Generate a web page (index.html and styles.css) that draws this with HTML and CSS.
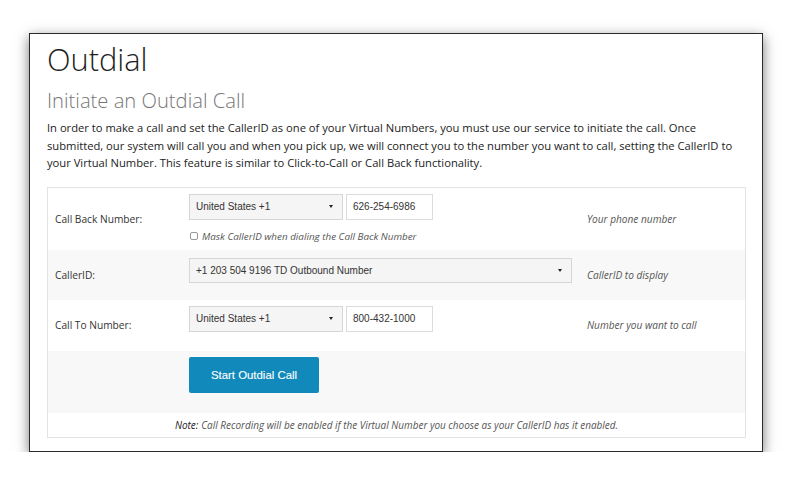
FILE: index.html
```html
<!DOCTYPE html>
<html>
<head>
<meta charset="utf-8">
<link rel="stylesheet" href="styles.css">
</head>
<body>
<div class="window">
  <h1 class="title">Outdial</h1>
  <h2 class="subtitle">Initiate an Outdial Call</h2>
  <p class="intro">In order to make a call and set the CallerID as one of your Virtual Numbers, you must use our service to initiate the call. Once submitted, our system will call you and when you pick up, we will connect you to the number you want to call, setting the CallerID to your Virtual Number. This feature is similar to Click-to-Call or Call Back functionality.</p>

  <div class="form">
    <div class="row row-callback">
      <div class="label">Call Back Number:</div>
      <div class="field">
        <div class="pair">
          <div class="select country"><span>United States +1</span><span class="caret"></span></div>
          <div class="input">626-254-6986</div>
        </div>
        <label class="check"><span class="box"></span><span>Mask CallerID when dialing the Call Back Number</span></label>
      </div>
      <div class="help">Your phone number</div>
    </div>

    <div class="row row-alt row-callerid">
      <div class="label">CallerID:</div>
      <div class="field">
        <div class="select wide"><span>+1 203 504 9196 TD Outbound Number</span><span class="caret"></span></div>
      </div>
      <div class="help">CallerID to display</div>
    </div>

    <div class="row row-callto">
      <div class="label">Call To Number:</div>
      <div class="field">
        <div class="pair">
          <div class="select country"><span>United States +1</span><span class="caret"></span></div>
          <div class="input">800-432-1000</div>
        </div>
      </div>
      <div class="help">Number you want to call</div>
    </div>

    <div class="row row-alt row-action">
      <div class="label"></div>
      <div class="field">
        <button class="btn">Start Outdial Call</button>
      </div>
      <div class="help"></div>
    </div>

    <div class="note"><b>Note:</b> Call Recording will be enabled if the Virtual Number you choose as your CallerID has it enabled.</div>
  </div>
</div>
</body>
</html>
```

FILE: styles.css
```css
html, body {
  margin: 0;
  padding: 0;
  background: #ffffff;
}

body {
  font-family: "Open Sans", "Noto Sans", sans-serif;
  color: #222;
}

.window {
  box-sizing: border-box;
  margin: 33px 0 0 29px;
  width: 734px;
  height: 419px;
  border: 1px solid #2a2a2a;
  background: #fff;
  box-shadow: 0 4px 12px rgba(0, 0, 0, 0.55);
  padding: 0 16px 0 17px;
}

.title {
  margin: 5px 0 0;
  font-size: 30.8px;
  line-height: 40px;
  font-weight: 300;
  color: #1e1e1e;
}

.subtitle {
  margin: 8px 0 0;
  font-size: 20.2px;
  line-height: 26px;
  font-weight: 300;
  color: #777;
}

.intro {
  margin: 6px 0 0;
  font-size: 11.2px;
  line-height: 17.6px;
  color: #222;
}

.form {
  margin-top: 15px;
  border: 1px solid #e3e3e3;
}

.row {
  display: grid;
  grid-template-columns: 141px 398px 1fr;
  align-items: center;
  background: #fff;
}

.row-alt {
  background: #f8f8f8;
}

.row-callback { height: 62px; }
.row-callerid { height: 50px; }
.row-callto { height: 51px; }
.row-action { height: 62px; }

.label {
  padding-left: 7px;
  font-size: 10.2px;
  color: #333;
}

.field {
  align-self: start;
  padding-top: 6px;
}

.row-callerid .field {
  padding-top: 8px;
}

.help {
  font-size: 10.1px;
  font-style: italic;
  color: #555;
}

.pair {
  display: flex;
  gap: 3px;
}

.select,
.input {
  box-sizing: border-box;
  height: 26px;
  display: flex;
  align-items: center;
  font-family: "Liberation Sans", Arial, sans-serif;
  font-size: 10px;
  color: #333;
}

.select {
  justify-content: space-between;
  padding: 0 9px 0 6px;
  background: #f5f5f5;
  border: 1px solid #d6d6d6;
}

.country {
  width: 154px;
}

.wide {
  width: 383px;
  height: 25px;
}

.caret {
  width: 0;
  height: 0;
  border-left: 2px solid transparent;
  border-right: 2px solid transparent;
  border-top: 3px solid #222;
}

.input {
  width: 87px;
  padding: 0 6px;
  background: #fff;
  border: 1px solid #dcdcdc;
}

.check {
  display: flex;
  align-items: center;
  gap: 4px;
  margin-top: 9px;
  font-size: 9.85px;
  font-style: italic;
  color: #555;
}

.box {
  box-sizing: border-box;
  width: 8px;
  height: 8px;
  border: 1px solid #999;
  border-radius: 2px;
  background: #fff;
  margin-left: 1px;
}

.btn {
  width: 130px;
  height: 36px;
  border: none;
  border-radius: 2px;
  background: #1189bb;
  color: #fff;
  font-family: "Liberation Sans", Arial, sans-serif;
  font-size: 11.4px;
  -webkit-text-stroke: 0.12px #fff;
  padding: 0;
}

.note {
  height: 24px;
  display: flex;
  align-items: center;
  justify-content: center;
  font-size: 9.95px;
  font-style: italic;
  color: #555;
}

.note b {
  font-weight: normal;
  color: #222;
  margin-right: 3px;
}
```
